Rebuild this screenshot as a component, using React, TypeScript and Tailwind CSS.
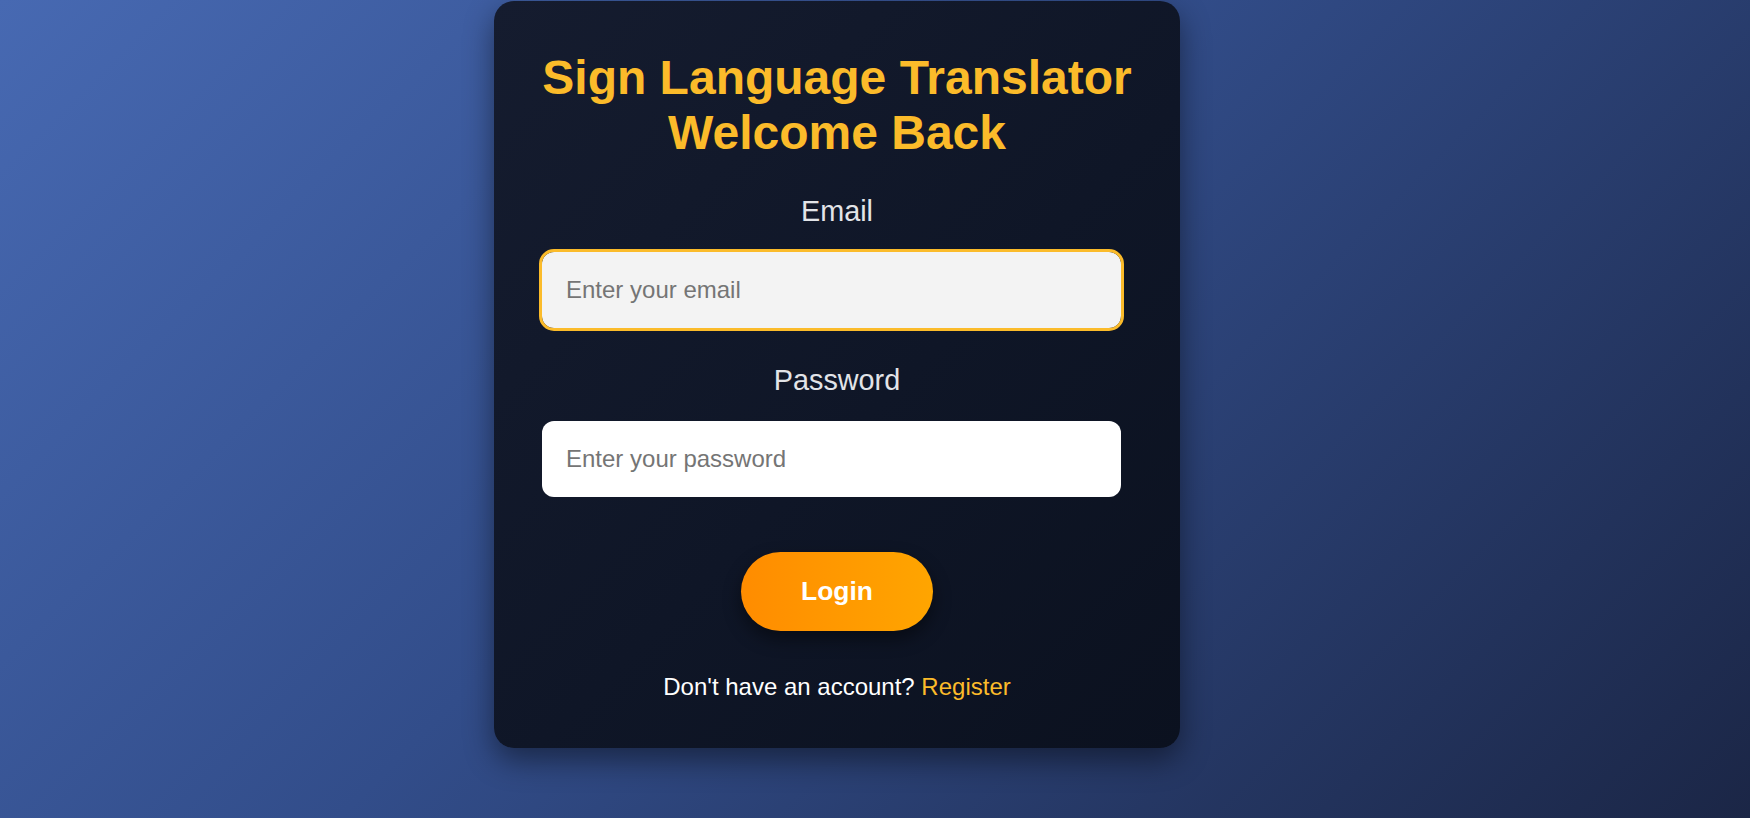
import React from "react";

export default function App() {
  return (
    <div
      className="min-h-screen w-full flex justify-center items-start pr-[76px] pt-px bg-[linear-gradient(135deg,#4769b2_0%,#324d8a_45%,#1b2646_100%)]"
      style={{ fontFamily: '"Liberation Sans", Arial, sans-serif' }}
    >
      <div className="w-[686px] rounded-[20px] bg-[linear-gradient(135deg,#151c2f_0%,#0f1627_55%,#0b111f_100%)] px-12 pt-[49px] pb-[47px] shadow-[0_12px_30px_rgba(0,0,0,0.45)] flex flex-col items-center">
        <h1 className="text-[48px] leading-[55px] font-bold text-[#fbbb2a] text-center">
          Sign Language Translator
          <br />
          Welcome Back
        </h1>

        <div className="w-full mt-[35px] flex flex-col items-center">
          <label className="text-[28.8px] leading-[33px] text-[#e2e4e8]">Email</label>
          <div className="w-full mt-[24px] pr-[11px]">
            <input
              type="email"
              placeholder="Enter your email"
              className="block w-full h-[76px] px-[24px] rounded-[12px] bg-[#f3f3f3] text-[24px] text-[#333] placeholder:text-[#757575] outline-[3px] outline-solid outline-[#fbbb2a] border-0"
              style={{ fontFamily: '"Liberation Sans", Arial, sans-serif' }}
            />
          </div>
        </div>

        <div className="w-full mt-[35.5px] flex flex-col items-center">
          <label className="text-[28.8px] leading-[33px] text-[#e2e4e8]">Password</label>
          <div className="w-full mt-[24px] pr-[11px]">
            <input
              type="password"
              placeholder="Enter your password"
              className="block w-full h-[76px] px-[24px] rounded-[12px] bg-white text-[24px] text-[#333] placeholder:text-[#757575] outline-none border-0"
              style={{ fontFamily: '"Liberation Sans", Arial, sans-serif' }}
            />
          </div>
        </div>

        <button
          className="mt-[55px] h-[79px] w-[192px] rounded-full bg-[linear-gradient(90deg,#ff8c00,#ffa500)] text-white font-bold text-[26.4px] leading-[30px] shadow-[0_8px_18px_rgba(0,0,0,0.45)]"
          style={{ fontFamily: '"Liberation Sans", Arial, sans-serif' }}
        >
          Login
        </button>

        <p className="mt-[42px] text-[24px] leading-[28px] text-white">
          Don&apos;t have an account? <span className="text-[#fbbb2a]">Register</span>
        </p>
      </div>
    </div>
  );
}
